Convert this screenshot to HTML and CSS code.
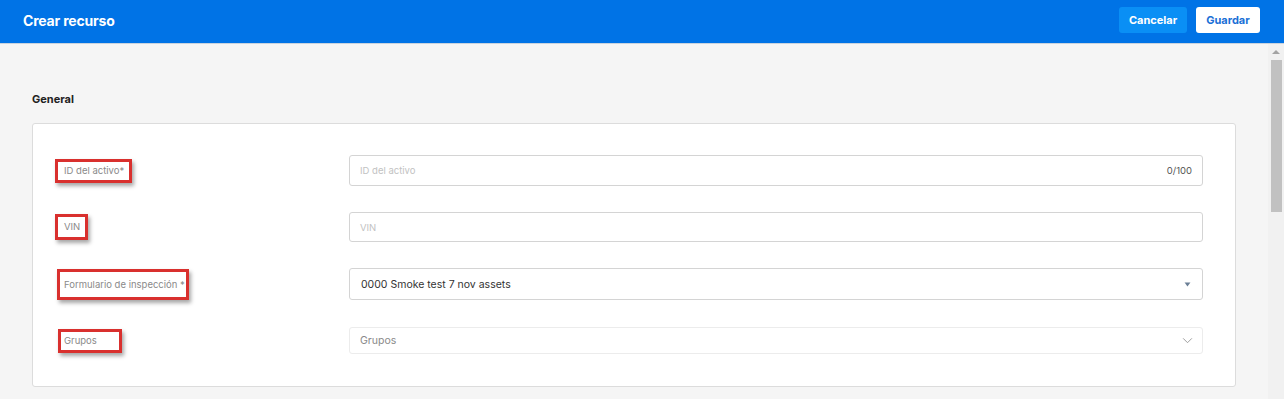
FILE: index.html
```html
<!DOCTYPE html>
<html lang="es">
  <head>
    <meta charset="UTF-8" />
    <meta name="viewport" content="width=device-width, initial-scale=1.0" />
    <title>Crear recurso</title>
    <link rel="stylesheet" href="styles.css">
  </head>
  <body>
    <header class="topbar">
      <h1>Crear recurso</h1>
      <div class="actions">
        <button class="btn btn-cancel">Cancelar</button>
        <button class="btn btn-save">Guardar</button>
      </div>
    </header>

    <div class="page">
      <main class="content">
        <h2 class="section-title">General</h2>

        <div class="card">
          <div class="row row-id">
            <div class="label-col"><span class="label">ID del activo*</span></div>
            <div class="field">
              <span class="placeholder">ID del activo</span>
              <span class="counter">0/100</span>
            </div>
          </div>

          <div class="row row-vin">
            <div class="label-col"><span class="label">VIN</span></div>
            <div class="field">
              <span class="placeholder">VIN</span>
            </div>
          </div>

          <div class="row row-form">
            <div class="label-col"><span class="label">Formulario de inspección *</span></div>
            <div class="field field-select">
              <span class="value">0000 Smoke test 7 nov assets</span>
              <svg class="caret" viewBox="0 0 8 6" width="7" height="5">
                <path d="M0.5 0.5h7L4 5.5z" fill="#6b7f96" />
              </svg>
            </div>
          </div>

          <div class="row row-groups">
            <div class="label-col"><span class="label">Grupos</span></div>
            <div class="field field-multi">
              <span class="value muted">Grupos</span>
              <svg class="chevron" viewBox="0 0 12 8" width="11" height="7">
                <path d="M1 1.5l5 5 5-5" fill="none" stroke="#9a9a9a" stroke-width="1.1" />
              </svg>
            </div>
          </div>
        </div>
      </main>

      <div class="scrollbar">
        <div class="scroll-up"></div>
        <div class="scroll-thumb"></div>
      </div>
    </div>
  </body>
</html>
```

FILE: styles.css
```css
body {
  margin: 0;
  height: 399px;
  overflow: hidden;
  font-family: "Inter", "Roboto", sans-serif;
  background: #f5f5f5;
  display: flex;
  flex-direction: column;
}

.topbar {
  height: 43px;
  flex-shrink: 0;
  background: #0073e6;
  border-bottom: 1px solid #c9d3de;
  display: flex;
  align-items: center;
  justify-content: space-between;
  padding: 0 24px 0 23px;
}

.topbar h1 {
  margin: 0;
  margin-top: -3px;
  color: #fff;
  font-size: 14px;
  font-weight: 700;
  letter-spacing: -0.2px;
}

.actions {
  display: flex;
  gap: 9px;
  margin-top: -3px;
}

.btn {
  height: 26px;
  border: none;
  border-radius: 3px;
  font-family: "Inter", sans-serif;
  font-size: 11px;
  font-weight: 700;
  padding: 0;
}

.btn-cancel {
  width: 68px;
  background: #0a8ff5;
  color: #fff;
}

.btn-save {
  width: 64px;
  background: #fff;
  color: #1a6fd6;
}

.page {
  flex: 1;
  display: flex;
  min-height: 0;
}

.content {
  flex: 1;
  padding: 48px 32px 0;
}

.section-title {
  margin: 0 0 17px;
  font-size: 11px;
  font-weight: 700;
  color: #222;
  line-height: 14px;
}

.card {
  background: #fff;
  border: 1px solid #dcdcdc;
  border-radius: 3px;
  padding: 31px 32px 32px 31px;
  display: flex;
  flex-direction: column;
  gap: 26px;
}

.row {
  display: flex;
  align-items: center;
}

.row-groups {
  margin-top: 1px;
}

.label-col {
  width: 285px;
  flex-shrink: 0;
}

.label {
  display: inline-block;
  margin-left: -9px;
  padding: 3px 5px 3px 6px;
  border: 3px solid #d9302e;
  box-shadow: 2px 3px 4px rgba(0, 0, 0, 0.35);
  font-size: 9.5px;
  line-height: 12px;
  color: #8a8a8a;
}

.row-form .label {
  margin-left: -7px;
  padding: 7px 1px 6px 4px;
}

.row-vin .label {
  padding: 4px 5px 4px 6px;
}

.row-groups .label {
  margin-left: -6px;
  padding: 3px 22px 3px 3px;
}

.field {
  flex: 1;
  height: 29px;
  border: 1px solid #d4d4d4;
  border-radius: 3px;
  display: flex;
  align-items: center;
  justify-content: space-between;
  padding: 0 10px 0 10px;
  font-size: 9.5px;
}

.row-vin .field {
  height: 28px;
}

.placeholder {
  color: #c2c2c2;
}

.counter {
  color: #555;
  font-size: 9.5px;
}

.field-select {
  height: 30px;
  padding-left: 11px;
}

.field-select .value {
  font-size: 10.5px;
  color: #333;
}

.caret {
  margin-right: 1px;
}

.field-multi {
  height: 25px;
  border-color: #ececec;
  padding-right: 9px;
}

.value.muted {
  font-size: 10.5px;
  color: #8a8a8a;
}

.scrollbar {
  width: 16px;
  flex-shrink: 0;
  background: #f1f1f1;
  display: flex;
  flex-direction: column;
  align-items: center;
}

.scroll-up {
  margin-top: 6px;
  width: 0;
  height: 0;
  border-left: 4px solid transparent;
  border-right: 4px solid transparent;
  border-bottom: 4px solid #a3a3a3;
}

.scroll-thumb {
  margin-top: 6px;
  width: 11px;
  height: 152px;
  background: #c1c1c1;
}
```
